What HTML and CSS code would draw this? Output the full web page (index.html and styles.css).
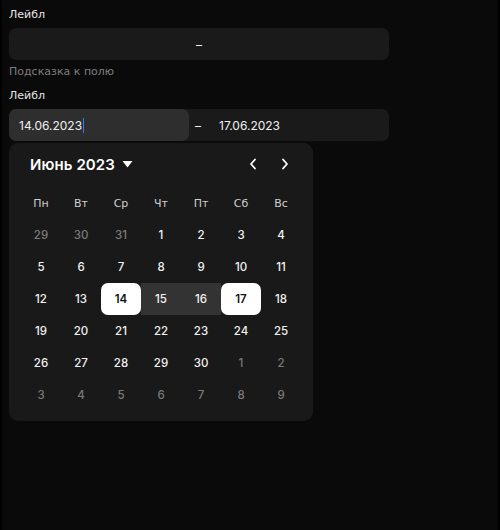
FILE: index.html
```html
<!DOCTYPE html>
<html lang="ru">
<head>
<meta charset="utf-8">
<link rel="stylesheet" href="styles.css">
</head>
<body>
<div class="page">
  <div class="field">
    <div class="label">Лейбл</div>
    <div class="input single"><span>–</span></div>
    <div class="hint">Подсказка к полю</div>
  </div>
  <div class="field">
    <div class="label">Лейбл</div>
    <div class="input range">
      <div class="part active"><span class="val">14.06.2023</span><span class="caret"></span></div>
      <div class="dash">–</div>
      <div class="part"><span class="val">17.06.2023</span></div>
    </div>
    <div class="calendar">
      <div class="cal-head">
        <div class="month">Июнь 2023
          <svg width="11" height="8" viewBox="0 0 11 8"><path d="M0.5 1h10L5.5 7.5z" fill="#fff"/></svg>
        </div>
        <div class="nav">
          <svg width="10" height="12" viewBox="0 0 10 12"><path d="M7 1.5L3 6l4 4.5" fill="none" stroke="#fff" stroke-width="1.8" stroke-linecap="round" stroke-linejoin="round"/></svg>
          <svg width="10" height="12" viewBox="0 0 10 12"><path d="M3 1.5L7 6l-4 4.5" fill="none" stroke="#fff" stroke-width="1.8" stroke-linecap="round" stroke-linejoin="round"/></svg>
        </div>
      </div>
      <div class="grid">
        <div class="wd">Пн</div><div class="wd">Вт</div><div class="wd">Ср</div><div class="wd">Чт</div><div class="wd">Пт</div><div class="wd">Сб</div><div class="wd">Вс</div>
        <div class="d out">29</div><div class="d out">30</div><div class="d out">31</div><div class="d">1</div><div class="d">2</div><div class="d">3</div><div class="d">4</div>
        <div class="d">5</div><div class="d">6</div><div class="d">7</div><div class="d">8</div><div class="d">9</div><div class="d">10</div><div class="d">11</div>
        <div class="d">12</div><div class="d">13</div><div class="d sel start">14</div><div class="d inr">15</div><div class="d inr">16</div><div class="d sel end">17</div><div class="d">18</div>
        <div class="d">19</div><div class="d">20</div><div class="d">21</div><div class="d">22</div><div class="d">23</div><div class="d">24</div><div class="d">25</div>
        <div class="d">26</div><div class="d">27</div><div class="d">28</div><div class="d">29</div><div class="d">30</div><div class="d out">1</div><div class="d out">2</div>
        <div class="d out">3</div><div class="d out">4</div><div class="d out">5</div><div class="d out">6</div><div class="d out">7</div><div class="d out">8</div><div class="d out">9</div>
      </div>
    </div>
  </div>
</div>
</body>
</html>
```
FILE: styles.css
```css
html, body {
  margin: 0;
  padding: 0;
  background: #000;
  height: 100%;
}
.page {
  margin: 0 2px;
  min-height: 530px;
  background: #0a0a0a;
  padding: 7px 7px 0;
  box-sizing: border-box;
  font-family: "DejaVu Sans", sans-serif;
  color: #e8e8e8;
}
.field {
  width: 380px;
}
.label {
  font-size: 11px;
  line-height: 16px;
  height: 16px;
  margin-bottom: 5px;
  color: #e6e6e6;
}
.input {
  height: 32px;
  border-radius: 7px;
  background: #1a1a1a;
  font-family: "Inter", sans-serif;
  font-size: 12px;
  color: #f0f0f0;
}
.single {
  display: flex;
  align-items: center;
  justify-content: center;
}
.hint {
  font-size: 11px;
  line-height: 16px;
  color: #7d7d7d;
  margin-top: 4px;
  margin-bottom: 8px;
}
.range {
  display: flex;
  align-items: center;
}
.part {
  width: 180px;
  height: 32px;
  box-sizing: border-box;
  padding-left: 10px;
  display: flex;
  align-items: center;
  border-radius: 7px;
}
.part.active {
  background: #2e2e2e;
}
.caret {
  display: inline-block;
  width: 1px;
  height: 15px;
  background: #2a7fff;
  margin-left: 1px;
}
.dash {
  width: 20px;
  padding-left: 6px;
  box-sizing: border-box;
}
.calendar {
  margin-top: 2px;
  width: 304px;
  box-sizing: border-box;
  background: #191919;
  border-radius: 9px;
  padding: 8px 12px 10px;
}
.cal-head {
  height: 26px;
  display: flex;
  align-items: center;
  justify-content: space-between;
  margin-bottom: 10px;
  padding-left: 9px;
}
.month {
  font-family: "Inter", sans-serif;
  font-weight: 600;
  font-size: 15px;
  color: #fff;
  display: flex;
  align-items: center;
  gap: 7px;
  letter-spacing: 0.1px;
}
.nav {
  display: flex;
  gap: 22px;
  padding-right: 11px;
  align-items: center;
}
.grid {
  display: grid;
  grid-template-columns: repeat(7, 40px);
  grid-auto-rows: 32px;
}
.wd {
  display: flex;
  align-items: center;
  justify-content: center;
  font-size: 11px;
  color: #cfcfcf;
}
.d {
  display: flex;
  align-items: center;
  justify-content: center;
  font-family: "Inter", sans-serif;
  font-size: 11.5px;
  font-weight: 500;
  color: #f2f2f2;
}
.d.out {
  color: #7a7a7a;
}
.d.inr {
  background: #333;
}
.d.sel {
  background: #fff;
  color: #111;
  font-weight: 600;
  border-radius: 7px;
}
```
